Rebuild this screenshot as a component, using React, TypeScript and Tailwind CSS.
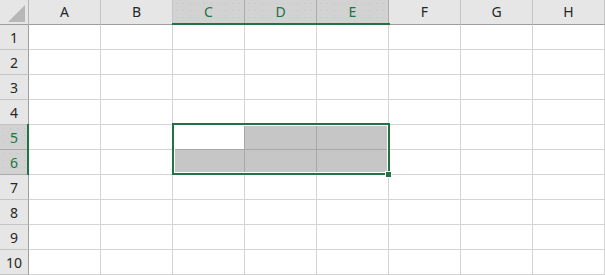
import React from "react";

const COLS = ["A", "B", "C", "D", "E", "F", "G", "H"];
const ROWS = [1, 2, 3, 4, 5, 6, 7, 8, 9, 10];

const selCols = new Set([2, 3, 4]);
const selRows = new Set([5, 6]);

export default function App() {
  return (
    <div
      className="relative w-[605px] h-[275px] overflow-hidden bg-white text-[#262626]"
      style={{ fontFamily: '"Noto Sans", "Liberation Sans", sans-serif' }}
    >
      <div className="grid grid-cols-[29px_repeat(8,72px)] grid-rows-[25px_repeat(10,25px)]">
        {/* corner */}
        <div className="relative bg-[#e6e6e6] border-r border-b border-r-[#b5b5b5] border-b-[#9e9e9e]">
          <svg className="absolute left-0 top-0" width="28" height="24" viewBox="0 0 28 24">
            <polygon points="8,22 25,22 25,5" fill="#b7b7b7" />
          </svg>
        </div>
        {COLS.map((c, i) => (
          <div
            key={c}
            className={
              selCols.has(i)
                ? "flex items-center justify-center pb-[1px] text-[14px] text-[#217346] bg-[#d2d2d2] bg-[radial-gradient(#c2c2c2_0.8px,transparent_1px)] bg-[length:7px_7px] border-r border-b border-r-[#ababab] border-b-[#9e9e9e]"
                : "flex items-center justify-center pb-[1px] text-[14px] text-[#262626] bg-[#e6e6e6] border-r border-b border-r-[#c4c4c4] border-b-[#9e9e9e]"
            }
          >
            {c}
          </div>
        ))}
        {ROWS.map((r) => (
          <React.Fragment key={r}>
            <div
              className={
                selRows.has(r)
                  ? "flex items-center justify-center text-[14px] text-[#217346] bg-[#d2d2d2] bg-[radial-gradient(#c2c2c2_0.8px,transparent_1px)] bg-[length:7px_7px] border-r border-b border-r-[#9e9e9e] border-b-[#ababab]"
                  : "flex items-center justify-center text-[14px] text-[#262626] bg-[#e6e6e6] border-r border-b border-r-[#9e9e9e] border-b-[#c4c4c4]"
              }
            >
              {r}
            </div>
            {COLS.map((c, i) => {
              const inSel = selRows.has(r) && selCols.has(i);
              const active = r === 5 && i === 2;
              let cls = "border-r border-b ";
              if (inSel) {
                cls += active ? "bg-white border-[#a8a8a8]" : "bg-[#c6c6c6] border-[#a8a8a8]";
              } else {
                cls += "bg-white border-[#d4d4d4]";
              }
              return <div key={c} className={cls} />;
            })}
          </React.Fragment>
        ))}
      </div>

      {/* column header selection line */}
      <div className="absolute left-[172px] top-[23px] w-[218px] h-[2px] bg-[#217346]" />
      {/* row header selection line */}
      <div className="absolute left-[27px] top-[124px] w-[2px] h-[51px] bg-[#217346]" />
      {/* selection border */}
      <div className="absolute left-[172px] top-[123px] w-[218px] h-[52px] border-2 border-[#217346]">
        <div className="w-full h-full border border-white" />
      </div>
      {/* fill handle */}
      <div className="absolute left-[385px] top-[171px] w-[7px] h-[7px] bg-white">
        <div className="m-[1px] w-[5px] h-[5px] bg-[#217346]" />
      </div>
    </div>
  );
}
